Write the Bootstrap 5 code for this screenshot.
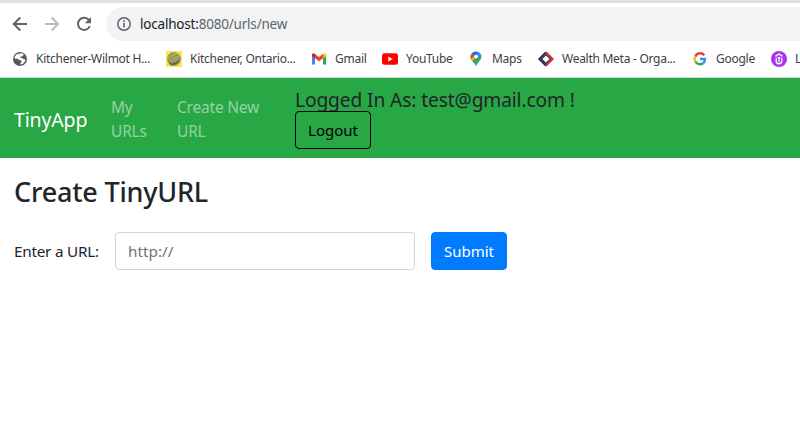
<!DOCTYPE html>
<html lang="en">
<head>
<meta charset="utf-8">
<meta name="viewport" content="width=device-width, initial-scale=1">
<title>TinyApp</title>
<link href="https://cdn.jsdelivr.net/npm/bootstrap@5.3.0/dist/css/bootstrap.min.css" rel="stylesheet">
<style>
body { font-family: "Noto Sans", "Open Sans", sans-serif; color: #212529; overflow: hidden; }
.browser-bar { height: 78px; border-top: 3px solid #dee1e6; border-bottom: 1px solid #dadce0; background: #fff; }
.toolbar-row { height: 42px; padding: 4px 0 4px 12px; }
.toolbar-row .nav-icon { width: 16px; height: 16px; margin-right: 16px; }
.address { height: 34px; background: #f1f3f4; border-radius: 17px 0 0 17px; margin-left: -2px; padding-left: 10px; font-size: 13.5px; color: #5f6368; letter-spacing: -.2px; }
.address b { font-weight: 400; color: #202124; }
.bookmarks { height: 28px; padding-left: 12px; font-size: 12px; color: #3c4043; letter-spacing: -.27px; }
.bookmark { flex: none; gap: 8px; white-space: nowrap; }
.bookmark svg { flex: none; }
.w-a { width: 154px; } .w-b { width: 145px; } .w-c { width: 71px; } .w-d { width: 86px; }
.w-e { width: 70px; } .w-f { width: 154px; } .w-g { width: 79px; }
.app-bar { height: 80px; background: #28a745; padding: 0 14px; }
.app-bar .navbar-brand { font-size: 19.5px; letter-spacing: -.15px; width: 73px; margin: 3px 24px 0 0; padding: 0; color: #fff; white-space: nowrap; }
.app-bar .navbar-nav { padding-top: 1px; }
.app-bar .nav-link { padding: 0; color: rgba(255,255,255,.5); font-size: 15.5px; line-height: 24px; letter-spacing: -.2px; }
.link-mine { width: 66px; } .link-new { width: 118px; }
.account { height: 62px; line-height: 24px; }
.who { font-size: 19.2px; letter-spacing: -.12px; line-height: 26px; height: 24px; white-space: nowrap; }
.btn { --bs-btn-border-radius: 4px; height: 38px; width: 76px; padding: 0; font-size: 15px; }
.btn-submit { --bs-btn-bg: #007bff; --bs-btn-border-color: #007bff; --bs-btn-color: #fff; }
.btn-logout { --bs-btn-border-color: #000; --bs-btn-color: #000; }
.content { padding: 17px 14px; }
.page-title { font-size: 27px; font-weight: 500; line-height: 34px; letter-spacing: -.2px; margin-bottom: 23px; }
.field-label { width: 85px; font-size: 15.3px; letter-spacing: -.25px; white-space: nowrap; }
.url-input { width: 300px; height: 38px; border-color: #ced4da; border-radius: 4px; font-size: 15.3px; }
.url-input::placeholder { color: #6c757d; }
</style>
<script src="https://cdn.jsdelivr.net/npm/bootstrap@5.3.0/dist/js/bootstrap.bundle.min.js"></script>
</head>
<body>
<header class="browser-bar">
  <div class="toolbar-row d-flex align-items-center">
    <svg class="nav-icon flex-shrink-0" viewBox="0 0 16 16" fill="none" stroke="#5f6368" stroke-width="2"><path d="M15 8H2.5M8.3 1.5 1.8 8l6.5 6.5"/></svg>
    <svg class="nav-icon flex-shrink-0" viewBox="0 0 16 16" fill="none" stroke="#babcbe" stroke-width="2"><path d="M1 8h12.5M7.7 1.5 14.2 8l-6.5 6.5"/></svg>
    <svg class="nav-icon flex-shrink-0" viewBox="0 0 16 16"><path d="M13 4.2A6.1 6.1 0 1 0 13.8 10" fill="none" stroke="#5f6368" stroke-width="2"/><path d="M15 1v6.2H8.8z" fill="#5f6368"/></svg>
    <div class="address d-flex align-items-center flex-grow-1 gap-2">
      <svg width="16" height="16" viewBox="0 0 16 16"><circle cx="8" cy="8" r="6.2" fill="none" stroke="#5f6368" stroke-width="1.5"/><path d="M7.2 7h1.6v4.4H7.2zM7.2 4.3h1.6v1.6H7.2z" fill="#5f6368"/></svg>
      <span><b>localhost:</b>8080/urls/new</span>
    </div>
  </div>
  <nav class="bookmarks d-flex align-items-center">
    <div class="bookmark w-a d-flex align-items-center"><svg width="16" height="16" viewBox="0 0 16 16"><circle cx="8" cy="8" r="7" fill="#55595e"/><path d="M8.500 2.300c1.500 0 2.500.5 3.300 1.300l-1.300 1.700-1.800.2-.6 1.300 2.500.3.800 1.200 2.200.3c-.3 2.500-2.300 4.600-5 5l-.3-1.300 1.500-1.300-.6-1.500-2.200-.4-1-1.400-3.600-.3c.1-2.500 2.100-4.500 4.100-4.900l.3.900z" fill="#fff"/></svg><span>Kitchener-Wilmot H...</span></div>
    <div class="bookmark w-b d-flex align-items-center"><svg width="16" height="16" viewBox="0 0 16 16"><path d="M0 0h16v16H0z" fill="#fae84d"/><circle cx="8" cy="8" r="7" fill="#a6a653"/><path d="M4 14c5 1 10-2 10.500-8C13 10 9 12 3 11.500z" fill="#53656b"/><g fill="none" stroke="#505f5a" stroke-width=".8" stroke-dasharray="1 1"><path d="M3 5 7 2M2 8l8-6M2 10l10-7M3 12l11-7M5 13l9-6M7 14l7-5"/></g><g fill="none" stroke="#e5dc6a" stroke-width=".6" stroke-dasharray="1 1"><path d="M2 7l7-5M2 9l9-7M4 11l10-7M5 12l9-6M6 13l8-5"/></g></svg><span>Kitchener, Ontario...</span></div>
    <div class="bookmark w-c d-flex align-items-center"><svg width="16" height="16" viewBox="0 0 16 16"><path d="M1 4v9.500h3V7z" fill="#4285f4"/><path d="M15 4v9.500h-3V7z" fill="#34a853"/><path d="M1 4c0-1.700 1.700-2 3-1l4 3 4-3v4.200l-4 3-4-3z" fill="#ea4335"/><path d="M12 3c1.300-1 3-.7 3 1v1l-3 2.300z" fill="#fbbc04"/><path d="M1 4c0-1.700 1.700-2 3-1v4.300L1 5z" fill="#c5221f"/></svg><span>Gmail</span></div>
    <div class="bookmark w-d d-flex align-items-center"><svg width="16" height="16" viewBox="0 0 16 16"><rect y="2.200" width="16" height="11.600" rx="2.500" fill="#f00"/><path d="m6.300 5.500 4.400 2.500-4.400 2.500z" fill="#fff"/></svg><span>YouTube</span></div>
    <div class="bookmark w-e d-flex align-items-center"><svg width="16" height="16" viewBox="0 0 16 16"><path d="M8 15.500C7.400 12 2.500 10 2.500 5.500L8 5.500l5.300-1.300c1 4.800-4.200 7-5.300 11.300z" fill="#34a853"/><path d="M2.500 5.500c0 1.900.8 3.300 1.800 4.500l7-8.300L8 5.500 3.700 2.400c-.8.900-1.200 2-1.200 3.100z" fill="#fbbc04"/><path d="M3.700 2.400 6.500 5l-3.300 3.300C2.200 6.200 2.400 4 3.700 2.400z" fill="#ea4335"/><path d="M3.700 2.400C5.600.1 9 0 11 1.400L7 6z" fill="#1a73e8"/><path d="M9.700.8c1.700.5 3 1.700 3.600 3.400L9 8.500 7 6z" fill="#4285f4"/><circle cx="8" cy="5.600" r="1.900" fill="#fff"/></svg><span>Maps</span></div>
    <div class="bookmark w-f d-flex align-items-center"><svg width="16" height="16" viewBox="0 0 16 16" fill="none"><path d="M8 1.200 1.200 8 8 14.800" stroke="#351c50" stroke-width="1.800"/><path d="m8 1.200 6.800 6.800L8 14.800" stroke="#e52b38" stroke-width="1.800"/><path d="m8 3.400 4.600 4.600L8 12.600 3.400 8z" fill="#fff" stroke="#35323c" stroke-width="1.400"/></svg><span>Wealth Meta - Orga...</span></div>
    <div class="bookmark w-g d-flex align-items-center"><svg width="16" height="16" viewBox="0 0 16 16" fill="none" stroke-width="2.400"><path d="M12.300 4.200A5.300 5.300 0 0 0 3.300 5.500" stroke="#ea4335"/><path d="M3.300 5.500a5.300 5.300 0 0 0 0 5" stroke="#fbbc05"/><path d="M3.300 10.500a5.300 5.300 0 0 0 8 1.500" stroke="#34a853"/><path d="M11.300 12A5.300 5.300 0 0 0 13 8H8" stroke="#4285f4"/></svg><span>Google</span></div>
    <div class="bookmark d-flex align-items-center"><svg width="16" height="16" viewBox="0 0 16 16"><circle cx="8" cy="8" r="8" fill="#a435f0"/><path d="M5 5.800V4.800l3-1.700 3 1.700v1M5.200 7v3.500c0 3 5.600 3 5.600 0V7M8 6.500v5M6.500 6.700h3" fill="none" stroke="#fff" stroke-width="1.300"/></svg><span>L</span></div>
  </nav>
</header>
<nav class="app-bar navbar navbar-expand justify-content-start flex-nowrap">
  <a class="navbar-brand" href="#">TinyApp</a>
  <div class="navbar-nav">
    <div class="link-mine"><a class="nav-link px-0" href="#">My<br>URLs</a></div>
    <div class="link-new"><a class="nav-link px-0" href="#">Create New<br>URL</a></div>
  </div>
  <div class="account d-flex flex-column align-items-start">
    <span class="who">Logged In As: test@gmail.com !</span>
    <button class="btn btn-logout" type="button">Logout</button>
  </div>
</nav>
<main class="content">
  <h3 class="page-title">Create TinyURL</h3>
  <form class="d-flex align-items-center gap-3">
    <label class="field-label" for="longURL">Enter a URL:</label>
    <input class="form-control url-input" id="longURL" type="text" placeholder="http://">
    <button class="btn btn-submit" type="button">Submit</button>
  </form>
</main>
</body>
</html>
